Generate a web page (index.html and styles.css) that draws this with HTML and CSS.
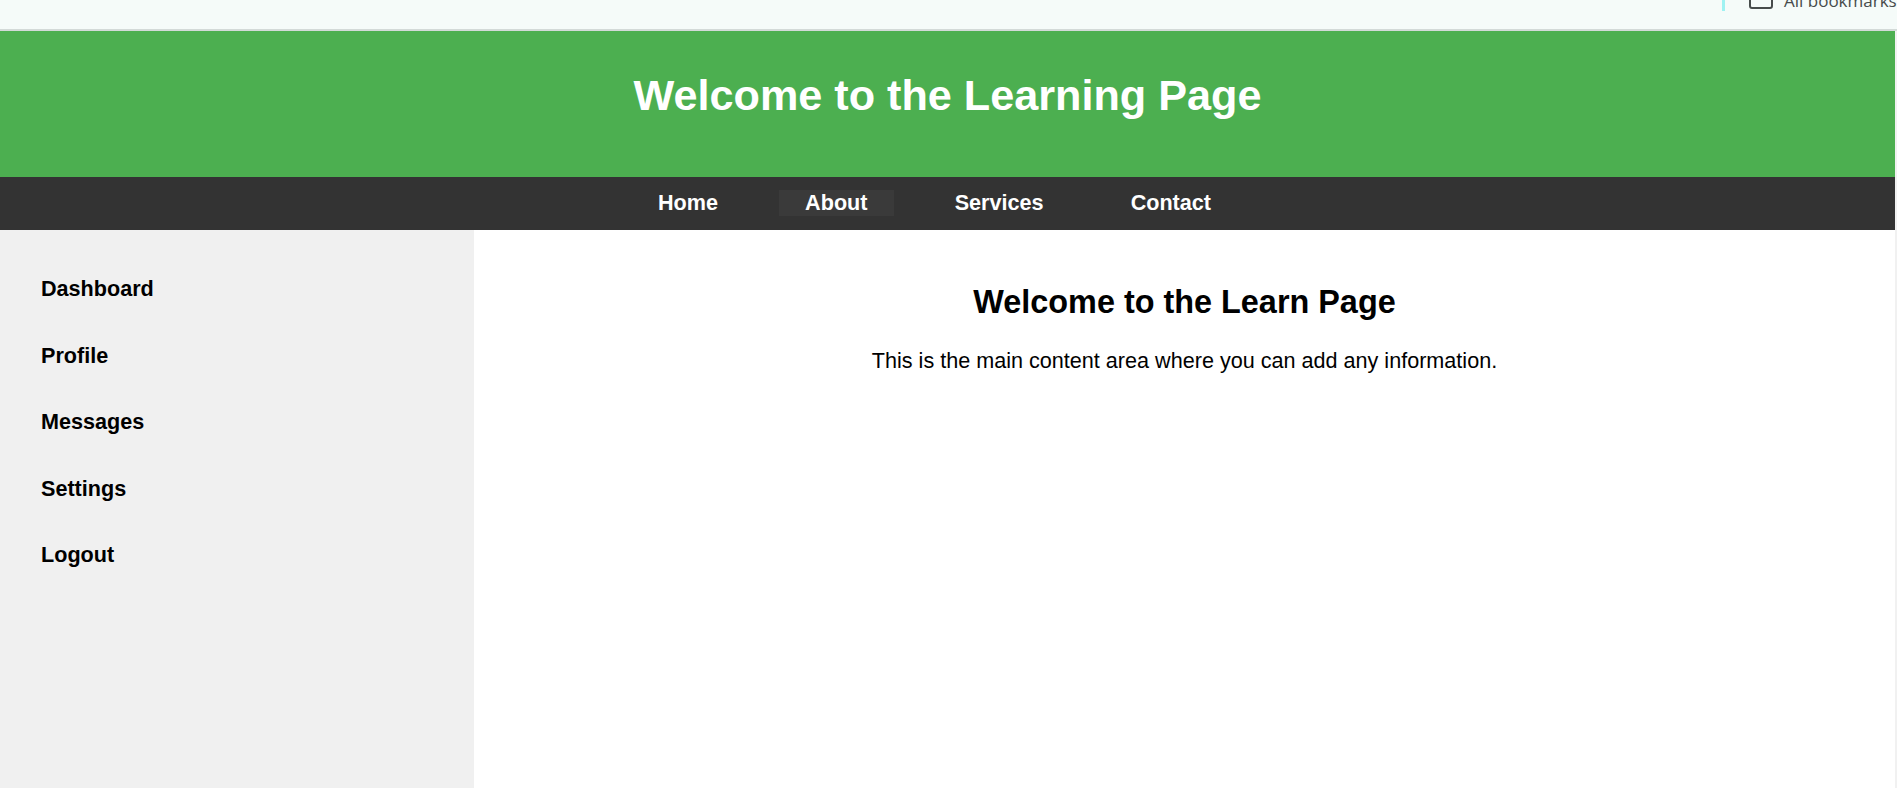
FILE: index.html
```html
<!DOCTYPE html>
<html lang="en">
<head>
    <meta charset="UTF-8">
    <meta name="viewport" content="width=device-width, initial-scale=1.0">
    <title>Learning Page</title>
    <link rel="stylesheet" href="styles.css">
</head>
<body>
    <!-- Browser bookmarks bar, cut off at the top -->
    <div class="bookmarks-bar">
        <span class="bar-divider"></span>
        <span class="folder-icon"></span>
        <span class="bookmarks-label">All bookmarks</span>
    </div>

    <div class="page">
        <header class="page-header">
            <h1>Welcome to the Learning Page</h1>
        </header>

        <nav class="top-nav">
            <a href="#">Home</a>
            <a href="#" class="active">About</a>
            <a href="#">Services</a>
            <a href="#">Contact</a>
        </nav>

        <div class="layout">
            <aside class="sidebar">
                <a href="#">Dashboard</a>
                <a href="#">Profile</a>
                <a href="#">Messages</a>
                <a href="#">Settings</a>
                <a href="#">Logout</a>
            </aside>

            <main class="content">
                <h2>Welcome to the Learn Page</h2>
                <p>This is the main content area where you can add any information.</p>
            </main>
        </div>
    </div>
</body>
</html>
```

FILE: styles.css
```css
html, body {
    height: 100%;
}
body {
    font-family: "Liberation Sans", Arial, sans-serif;
    background-color: #f1f1f1;
    margin: 0;
    overflow: hidden;
}
.bookmarks-bar {
    height: 29px;
    background-color: #f5fbf9;
    border-bottom: 2px solid #d3dad8;
    display: flex;
    align-items: flex-start;
    overflow: hidden;
    padding-left: 1722px;
}
.bar-divider {
    width: 3px;
    height: 11px;
    background-color: #9ff2f2;
    flex-shrink: 0;
}
.folder-icon {
    width: 20px;
    height: 20px;
    margin: -15px 0 0 24px;
    border: 2px solid #474c4c;
    border-radius: 3px;
    flex-shrink: 0;
}
.bookmarks-label {
    margin: -10px 0 0 11px;
    font-family: "Open Sans", sans-serif;
    font-size: 17px;
    line-height: 22px;
    color: #474c4c;
    white-space: nowrap;
}
.page {
    width: 1895px;
    height: 757px;
    background-color: white;
    display: flex;
    flex-direction: column;
}
.page-header {
    height: 146px;
    background-color: #4caf50;
    color: white;
    text-align: center;
}
.page-header h1 {
    margin: 0;
    padding-top: 39px;
    font-size: 43.2px;
    line-height: 50px;
}
.top-nav {
    height: 53px;
    background-color: #333;
    display: flex;
    justify-content: center;
    align-items: center;
    padding: 0 26px 1px 0;
    box-sizing: border-box;
}
.top-nav a {
    color: white;
    text-decoration: none;
    font-size: 21.6px;
    font-weight: bold;
    line-height: 26px;
    padding: 0 26.4px;
    margin: 0 17.2px;
}
.top-nav a.active {
    background-color: #3a3a3a;
}
.layout {
    flex: 1;
    display: flex;
}
.sidebar {
    width: 474px;
    background-color: #f0f0f0;
    padding: 46px 0 0 41px;
    box-sizing: border-box;
    display: flex;
    flex-direction: column;
    gap: 41.5px;
}
.sidebar a {
    color: black;
    text-decoration: none;
    font-size: 21.6px;
    font-weight: bold;
    line-height: 25px;
}
.content {
    flex: 1;
    text-align: center;
    padding-top: 53px;
}
.content h2 {
    margin: 0;
    font-size: 32.4px;
    line-height: 38px;
}
.content p {
    margin: 27px 0 0;
    font-size: 21.6px;
    line-height: 25px;
}
```
